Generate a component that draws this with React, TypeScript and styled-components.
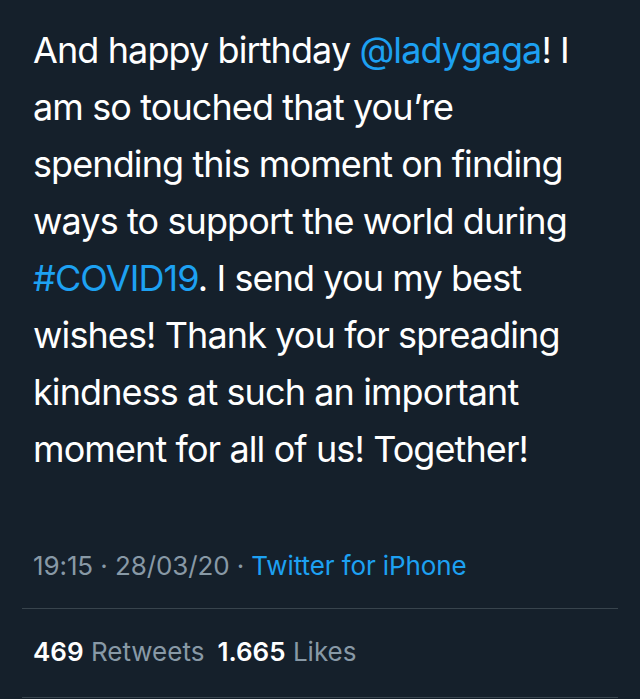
import React from "react";
import styled, { createGlobalStyle } from "styled-components";

const GlobalStyle = createGlobalStyle`
  html, body {
    margin: 0;
    padding: 0;
    background: #15202b;
  }
  body {
    font-family: Inter, "Noto Sans", sans-serif;
    -webkit-font-smoothing: antialiased;
  }
`;

interface StatProps {
  count: string;
  label: string;
}

function Stat({ count, label }: StatProps) {
  return (
    <S.Stat>
      <S.Count>{count}</S.Count> {label}
    </S.Stat>
  );
}

function App() {
  return (
    <>
      <GlobalStyle />
      <S.Tweet>
        <S.Body>
          And happy birthday <S.Link>@ladygaga</S.Link>! I<br />
          am so touched that you’re<br />
          spending this moment on finding<br />
          ways to support the world during<br />
          <S.Link>#COVID19</S.Link>. I send you my best<br />
          wishes! Thank you for spreading<br />
          kindness at such an important<br />
          moment for all of us! Together!
        </S.Body>
        <S.Meta>
          19:15 · 28/03/20 · <S.Link>Twitter for iPhone</S.Link>
        </S.Meta>
        <S.Stats>
          <Stat count="469" label="Retweets" />
          <Stat count="1.665" label="Likes" />
        </S.Stats>
      </S.Tweet>
    </>
  );
}

const S = {
  Tweet: styled.div`
    width: 640px;
    height: 699px;
    box-sizing: border-box;
    padding: 22px 22px 0 22px;
    background: #15202b;
    overflow: hidden;
  `,
  Body: styled.p`
    margin: 0;
    padding-left: 11px;
    color: #ffffff;
    font-size: 36px;
    line-height: 57px;
    letter-spacing: -0.9px;
    white-space: nowrap;
  `,
  Link: styled.span`
    color: #1da1f2;
  `,
  Meta: styled.div`
    margin-top: 71px;
    padding: 0 0 25px 11px;
    color: #8899a6;
    font-size: 26px;
    line-height: 34px;
    letter-spacing: -0.1px;
    border-bottom: 1px solid #38444d;
  `,
  Stats: styled.div`
    display: flex;
    gap: 13px;
    padding: 25px 0 27px 11px;
    font-size: 26px;
    line-height: 36px;
    color: #8899a6;
    border-bottom: 1px solid #38444d;
  `,
  Stat: styled.span``,
  Count: styled.b`
    color: #ffffff;
    font-weight: 600;
  `,
};

export default App;
